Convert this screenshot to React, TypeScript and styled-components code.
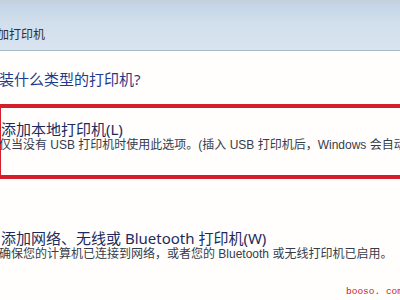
import React from 'react';
import styled, { createGlobalStyle } from 'styled-components';

const GlobalStyle = createGlobalStyle`
  html, body {
    margin: 0;
    padding: 0;
    background: #fffefc;
  }
  body {
    width: 400px;
    height: 300px;
    overflow: hidden;
    font-family: "Noto Sans", "Noto Sans CJK SC", sans-serif;
  }
`;

const Page = styled.div`
  position: relative;
  width: 400px;
  height: 300px;
  overflow: hidden;
  display: flex;
  flex-direction: column;
`;

const Header = styled.div`
  height: 51px;
  flex-shrink: 0;
  display: flex;
  align-items: flex-end;
  padding-bottom: 8px;
  box-sizing: border-box;
  background: linear-gradient(#c3d0dc 0px, #c6d6e7 6px, #d2dfec 24px, #d9e4f0 100%);
  border-bottom: 1px solid #a9b9c9;
`;

const HeaderTitle = styled.div`
  margin-left: -15px;
  font-size: 12px;
  line-height: 14px;
  color: #2a2f38;
  white-space: nowrap;
`;

const Body = styled.div`
  display: flex;
  flex-direction: column;
  margin-left: -1px;
`;

const Heading = styled.div`
  margin-top: 18px;
  margin-bottom: 15px;
  font-size: 15px;
  line-height: 20px;
  color: #1f3b8f;
  white-space: nowrap;
`;

const OptionBox = styled.div<{ $marked?: boolean; $gap?: number }>`
  display: flex;
  flex-direction: column;
  width: 520px;
  margin-left: -2px;
  margin-top: ${(p) => p.$gap ?? 0}px;
  box-sizing: border-box;
  border: 4px solid ${(p) => (p.$marked ? '#d21f2b' : 'transparent')};
  padding: 13px 0 23px 0;
`;

const OptionTitle = styled.div`
  font-size: 15px;
  line-height: 17px;
  color: #1b2b60;
  white-space: nowrap;
`;

const OptionDesc = styled.div`
  margin-left: -2px;
  font-family: "Liberation Sans", "Noto Sans CJK SC", sans-serif;
  font-size: 12px;
  line-height: 14px;
  color: #363c4a;
  white-space: nowrap;
`;

const Watermark = styled.div`
  position: absolute;
  right: -3px;
  bottom: 3px;
  font-family: "Liberation Mono", monospace;
  font-size: 9.5px;
  line-height: 10px;
  color: #cc1a1a;
  white-space: pre;
`;

export default function App() {
  return (
    <>
      <GlobalStyle />
      <Page>
        <Header>
          <HeaderTitle>添加打印机</HeaderTitle>
        </Header>
        <Body>
          <Heading>装什么类型的打印机?</Heading>
          <OptionBox $marked>
            <OptionTitle>添加本地打印机(L)</OptionTitle>
            <OptionDesc>
              仅当没有 USB 打印机时使用此选项。(插入 USB 打印机后，Windows 会自动安装 USB 打印机。)
            </OptionDesc>
          </OptionBox>
          <OptionBox $gap={34}>
            <OptionTitle>添加网络、无线或 Bluetooth 打印机(W)</OptionTitle>
            <OptionDesc>
              确保您的计算机已连接到网络，或者您的 Bluetooth 或无线打印机已启用。
            </OptionDesc>
          </OptionBox>
        </Body>
        <Watermark>booso. com</Watermark>
      </Page>
    </>
  );
}
